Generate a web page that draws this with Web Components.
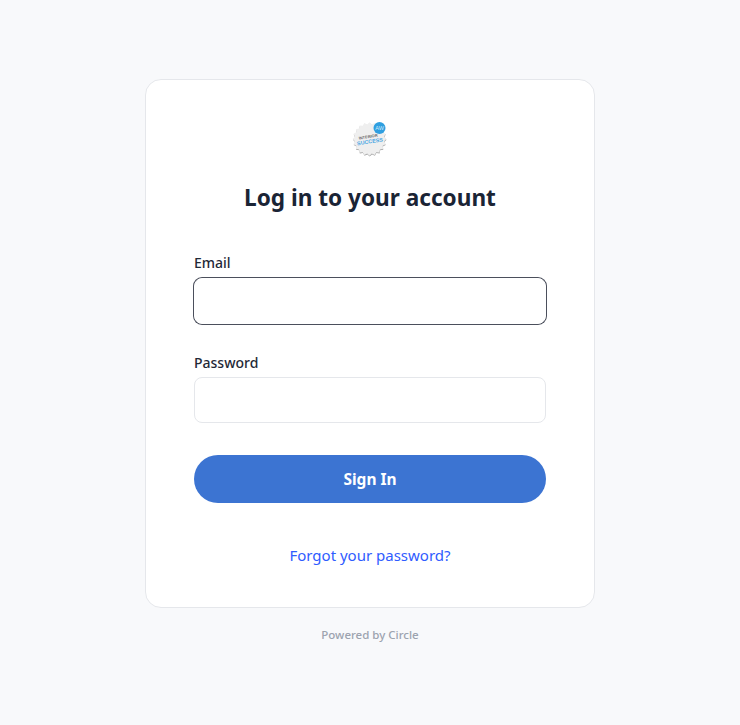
<!DOCTYPE html>
<html lang="en">
<head>
<meta charset="utf-8">
<title>Log in</title>
<style>
  html, body { margin: 0; height: 100%; }
  body {
    background: #f8f9fb;
    font-family: "Noto Sans", "Open Sans", sans-serif;
    color: #1b2433;
  }
</style>
</head>
<body>
<login-page>
  <login-card>
    <badge-logo slot="logo"></badge-logo>
    <h1 slot="title">Log in to your account</h1>
    <form-field label="Email" focused></form-field>
    <form-field label="Password" type="password"></form-field>
    <sign-button>Sign In</sign-button>
    <a slot="link" href="#">Forgot your password?</a>
  </login-card>
  <span slot="footer">Powered by Circle</span>
</login-page>

<script>
class LoginPage extends HTMLElement {
  constructor() {
    super();
    this.attachShadow({ mode: 'open' });
    this.shadowRoot.innerHTML = `
      <style>
        :host {
          display: flex;
          flex-direction: column;
          align-items: center;
          padding-top: 79px;
        }
        .footer {
          margin-top: 18px;
          font-size: 11.5px;
          line-height: 17px;
          font-weight: 500;
          color: #9ca3af;
        }
      </style>
      <slot></slot>
      <div class="footer"><slot name="footer"></slot></div>
    `;
  }
}

class LoginCard extends HTMLElement {
  constructor() {
    super();
    this.attachShadow({ mode: 'open' });
    this.shadowRoot.innerHTML = `
      <style>
        :host {
          display: flex;
          flex-direction: column;
          box-sizing: border-box;
          width: 450px;
          height: 529px;
          padding: 40px 48px 0;
          background: #fff;
          border: 1px solid #e5e7eb;
          border-radius: 16px;
        }
        .title {
          margin: 24px 0 35px;
          text-align: center;
        }
        ::slotted(h1) {
          margin: 0;
          font-size: 22.6px;
          line-height: 36px;
          font-weight: 700;
          color: #1a2435;
        }
        .link {
          margin-top: 40px;
          text-align: center;
          font-size: 15px;
          line-height: 24px;
        }
        ::slotted(a) {
          color: #2f5cff;
          text-decoration: none;
        }
      </style>
      <slot name="logo"></slot>
      <div class="title"><slot name="title"></slot></div>
      <slot></slot>
      <div class="link"><slot name="link"></slot></div>
    `;
  }
}

class BadgeLogo extends HTMLElement {
  constructor() {
    super();
    this.attachShadow({ mode: 'open' });
    // scalloped seal: points around a circle
    let pts = [];
    for (let i = 0; i < 40; i++) {
      const r = i % 2 ? 14.8 : 16.8;
      const a = i / 40 * Math.PI * 2;
      pts.push((17.5 + r * Math.cos(a)).toFixed(2) + ',' + (19 + r * Math.sin(a)).toFixed(2));
    }
    this.shadowRoot.innerHTML = `
      <style>
        :host { display: block; width: 36px; height: 36px; margin: 0 auto; }
        svg { display: block; overflow: visible; }
        text { font-family: "Liberation Sans", sans-serif; }
      </style>
      <svg width="36" height="36" viewBox="0 0 36 36">
        <polygon points="${pts.join(' ')}" fill="#a8a8a8" transform="translate(0.2 0.8)"/>
        <polygon points="${pts.join(' ')}" fill="#efefef"/>
        <g transform="rotate(-9 17 19)">
          <text x="16.5" y="18" font-size="4" font-weight="700" fill="#666" text-anchor="middle">INTERIOR</text>
          <text x="17.5" y="23.5" font-size="5.4" font-weight="700" fill="#4aa6e3" text-anchor="middle">SUCCESS</text>
        </g>
        <circle cx="27.5" cy="8" r="6" fill="#2f9fe0"/>
        <text x="27.5" y="10" font-size="5.5" fill="#cfeafa" text-anchor="middle">AW</text>
      </svg>
    `;
  }
}

class FormField extends HTMLElement {
  constructor() {
    super();
    this.attachShadow({ mode: 'open' });
    const label = this.getAttribute('label');
    const type = this.getAttribute('type') || 'text';
    this.shadowRoot.innerHTML = `
      <style>
        :host { display: block; margin-bottom: 26px; }
        :host([focused]) { margin-bottom: 27px; }
        label {
          display: block;
          height: 24px;
          margin-bottom: 2px;
          font-size: 14px;
          line-height: 24px;
          font-weight: 500;
          color: #1f2937;
        }
        :host([focused]) label { margin-bottom: 3px; }
        input {
          display: block;
          box-sizing: border-box;
          width: 100%;
          height: 46px;
          border: 1px solid #e5e7eb;
          border-radius: 8px;
          background: #fff;
          outline: none;
        }
        :host([focused]) input {
          border-color: #fff;
          box-shadow: 0 0 0 1px #4b4f5c;
        }
      </style>
      <label for="f">${label}</label>
      <input id="f" type="${type}">
    `;
  }
}

class SignButton extends HTMLElement {
  constructor() {
    super();
    this.attachShadow({ mode: 'open' });
    this.shadowRoot.innerHTML = `
      <style>
        :host { display: block; margin-top: 6px; }
        button {
          display: block;
          width: 100%;
          height: 48px;
          border: 0;
          border-radius: 24px;
          background: #3c74d2;
          color: #fff;
          font: 700 15.5px "Noto Sans", "Open Sans", sans-serif;
          cursor: pointer;
        }
      </style>
      <button type="button"><slot></slot></button>
    `;
  }
}

customElements.define('login-page', LoginPage);
customElements.define('login-card', LoginCard);
customElements.define('badge-logo', BadgeLogo);
customElements.define('form-field', FormField);
customElements.define('sign-button', SignButton);
</script>
</body>
</html>
